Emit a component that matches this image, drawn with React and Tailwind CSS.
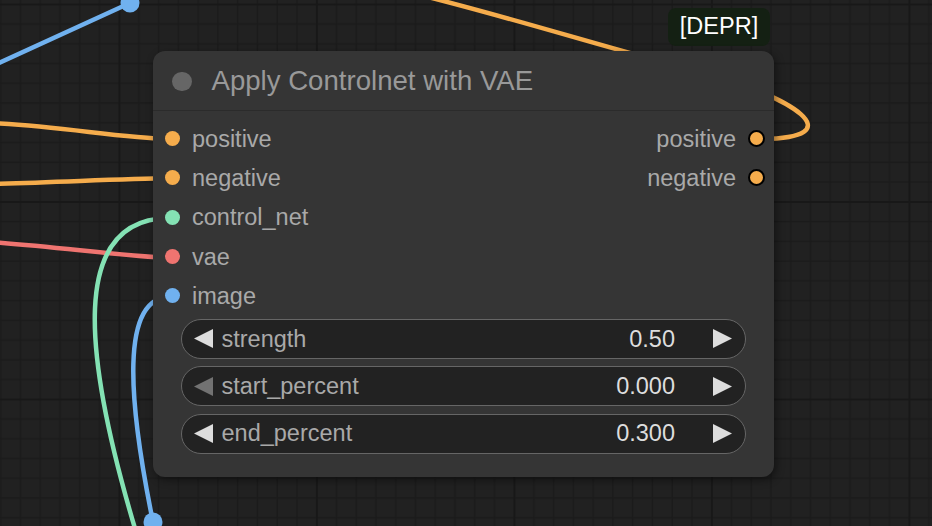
import React from 'react';

const inputs = [
    { name: 'positive', color: '#f5ac4c' },
    { name: 'negative', color: '#f5ac4c' },
    { name: 'control_net', color: '#84e2b4' },
    { name: 'vae', color: '#ef7470' },
    { name: 'image', color: '#70b1ef' },
];

const outputs = ['positive', 'negative'];

const widgets = [
    { name: 'strength', value: '0.50', atMin: false },
    { name: 'start_percent', value: '0.000', atMin: true },
    { name: 'end_percent', value: '0.300', atMin: false },
];

function Arrow({ dir, dim }) {
    return (
        <svg width="19" height="19" viewBox="0 0 19 19" className="shrink-0">
            <polygon
                points={dir === 'left' ? '0,9.5 19,0 19,19' : '19,9.5 0,0 0,19'}
                fill={dim ? '#727272' : '#dddddd'}
            />
        </svg>
    );
}

function Canvas() {
    const minor = [];
    for (let i = 0; i < 10; i++) minor.push(i * 19.75);
    return (
        <svg className="absolute inset-0" width="932" height="526" viewBox="0 0 932 526">
            <defs>
                <pattern id="grid" patternUnits="userSpaceOnUse" width="197.5" height="197.5" x="118.4" y="3.5">
                    <rect width="197.5" height="197.5" fill="#212121" />
                    {minor.map((p) => (
                        <g key={p}>
                            <rect x={p} y="0" width="1.6" height="197.5" fill="#1b1b1b" />
                            <rect x="0" y={p} width="197.5" height="1.6" fill="#1b1b1b" />
                        </g>
                    ))}
                    <rect x="-1" y="0" width="3" height="197.5" fill="#181818" />
                    <rect x="0" y="-1" width="197.5" height="3" fill="#181818" />
                </pattern>
            </defs>
            <rect width="932" height="526" fill="url(#grid)" />

            {/* wires */}
            <g fill="none" strokeWidth="4.5" strokeLinecap="round">
                <path d="M -10 67 L 130 3" stroke="#70b1ef" />
                <path d="M -10 123 C 60 126, 120 138, 170 139" stroke="#f5ac4c" />
                <path d="M -10 184 C 60 182, 120 179, 170 178" stroke="#f5ac4c" />
                <path d="M -10 242 C 60 247, 120 256, 170 258" stroke="#ef7470" />
                <path d="M 170 218 C 70 218, 80 350, 140 545" stroke="#84e2b4" />
                <path d="M 170 297 C 120 297, 128 400, 153 522" stroke="#70b1ef" />
                <path d="M 756 139 C 860 139, 790 95, 700 72 S 520 20, 420 -5" stroke="#f5ac4c" />
            </g>
            <circle cx="130" cy="3" r="9.5" fill="#70b1ef" />
            <circle cx="153" cy="522" r="9.5" fill="#70b1ef" />
        </svg>
    );
}

export default function App() {
    return (
        <div
            className="relative w-[932px] h-[526px] overflow-hidden bg-[#212121]"
            style={{ fontFamily: '"Liberation Sans", Arial, sans-serif' }}
        >
            <Canvas />

            {/* Badge */}
            <div className="absolute left-[668px] top-[8px] w-[102px] h-[38px] rounded-[8px] bg-[#142013] flex items-center justify-center text-[23.5px] text-white leading-none">
                [DEPR]
            </div>

            {/* Node */}
            <div className="absolute left-[153px] top-[51px] w-[621px] h-[426px] rounded-[12px] bg-[#353535] shadow-[2px_3px_8px_rgba(0,0,0,0.45)] flex flex-col">
                <div className="h-[60px] shrink-0 flex items-center pt-[1.5px] pl-[19px] border-b-[1.5px] border-[#2b2b2b]">
                    <div className="w-[19.5px] h-[19.5px] rounded-full bg-[#666666]" />
                    <span className="ml-[20px] text-[27.6px] text-[#999999] leading-none">
                        Apply Controlnet with VAE
                    </span>
                </div>

                <div className="pt-[8px] flex flex-col">
                    {inputs.map((input, i) => (
                        <div key={input.name} className="h-[39.3px] flex items-center justify-between pl-[12px] pr-[9px]">
                            <div className="flex items-center gap-[12px]">
                                <div className="w-[15px] h-[15px] rounded-full" style={{ backgroundColor: input.color }} />
                                <span className="pt-[2px] text-[23.5px] text-[#a9a9a9] leading-none">{input.name}</span>
                            </div>
                            {outputs[i] && (
                                <div className="flex items-center gap-[12px]">
                                    <span className="pt-[2px] text-[23.5px] text-[#a9a9a9] leading-none">{outputs[i]}</span>
                                    <div className="w-[17px] h-[17px] rounded-full bg-[#f5ac4c] border-2 border-black" />
                                </div>
                            )}
                        </div>
                    ))}
                </div>

                <div className="mt-[3.5px] px-[28px] flex flex-col gap-[7.3px]">
                    {widgets.map((w) => (
                        <div
                            key={w.name}
                            className="h-[40px] rounded-full border-[1.5px] border-[#666666] bg-[#222222] flex items-center pl-[11.5px] pr-[13px]"
                        >
                            <Arrow dir="left" dim={w.atMin} />
                            <span className="ml-[9px] pt-[1px] text-[23.5px] text-[#a9a9a9] leading-none">{w.name}</span>
                            <span className="ml-auto pt-[1px] text-[23.5px] text-[#dddddd] leading-none">{w.value}</span>
                            <div className="ml-[38px]">
                                <Arrow dir="right" />
                            </div>
                        </div>
                    ))}
                </div>
            </div>
        </div>
    );
}
